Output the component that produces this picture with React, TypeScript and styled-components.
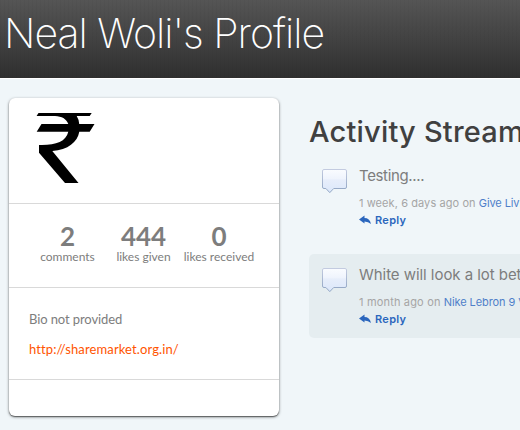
import React from "react";
import styled, { createGlobalStyle } from "styled-components";

const GlobalStyle = createGlobalStyle`
  *, *::before, *::after { box-sizing: border-box; }
  html, body { margin: 0; height: 100%; overflow: hidden; }
  body {
    background: #f0f6f9;
    font-family: Lato, sans-serif;
    font-variant-ligatures: none;
    color: #7d7d7d;
  }
  h1, h2, p { margin: 0; }
  a { text-decoration: none; }
`;

const Page = styled.div`
  width: 520px;
  height: 430px;
  overflow: hidden;
`;

const Header = styled.header`
  height: 79px;
  padding: 9px 0 0 4px;
  border-bottom: 1px solid #fff;
  background:
    repeating-linear-gradient(90deg, rgba(0, 0, 0, 0.025) 0 1px, transparent 1px 4px),
    linear-gradient(#555, #2f2f2f);
  background-clip: padding-box;
`;

const Title = styled.h1`
  font: 200 41px/48px Inter, sans-serif;
  letter-spacing: -1px;
  color: #fff;
  white-space: nowrap;
`;

const Columns = styled.main`
  display: grid;
  grid-template-columns: 270px 400px;
  column-gap: 30px;
  align-items: start;
  padding: 19px 0 0 9px;
`;

const Card = styled.aside`
  height: 318px;
  background: #fff;
  border-radius: 6px;
  box-shadow: 0 1px 3px rgba(0, 0, 0, 0.5), 0 1px 1px rgba(0, 0, 0, 0.4);
`;

const AvatarSection = styled.div`
  height: 106px;
  padding: 15px 0 0 21px;
  border-bottom: 1px solid #d9d9d9;
  svg { display: block; }
`;

const Stats = styled.div`
  display: flex;
  height: 84px;
  padding: 17px 0 0 31px;
  border-bottom: 1px solid #d9d9d9;
`;

const Stat = styled.div<{ $width: number; $gap: number }>`
  width: ${(p) => p.$width}px;
  margin-right: ${(p) => p.$gap}px;
  display: flex;
  flex-direction: column;
  align-items: center;
  white-space: nowrap;
`;

const StatValue = styled.strong`
  font: 700 26px/30px Lato, sans-serif;
  color: #7d7d7d;
`;

const StatLabel = styled.span`
  font-size: 12px;
  line-height: 12px;
`;

const Bio = styled.div`
  height: 92px;
  padding: 21px 20px 0;
  border-bottom: 1px solid #d9d9d9;
  font-size: 13px;
  line-height: 20px;
  letter-spacing: -0.1px;
`;

const SiteLink = styled.a`
  display: block;
  margin-top: 10px;
  letter-spacing: 0.12px;
  color: #ff5400;
`;

const Stream = styled.section`
  white-space: nowrap;
`;

const StreamTitle = styled.h2`
  height: 57px;
  padding-top: 16px;
  font: 500 29px/36px Inter, sans-serif;
  letter-spacing: 0.2px;
  color: #404040;
`;

const Activity = styled.article<{ $shaded?: boolean }>`
  display: flex;
  height: 84px;
  margin-bottom: 15px;
  padding: 13px 0 0 12px;
  border-radius: 5px;
  background: ${(p) => (p.$shaded ? "#e5edf0" : "transparent")};
`;

const ActivityBody = styled.div`
  margin-left: 11px;
`;

const Message = styled.p<{ $tracking: number }>`
  margin-top: -2px;
  font: 400 15px/20px Inter, sans-serif;
  letter-spacing: ${(p) => p.$tracking}px;
`;

const Meta = styled.p<{ $tracking: number }>`
  margin-top: 10px;
  font: 400 11px/14px Inter, sans-serif;
  letter-spacing: ${(p) => p.$tracking}px;
  color: #a5a5a5;
  a {
    letter-spacing: -0.1px;
    color: #4f7fc9;
  }
`;

const ReplyLink = styled.a`
  display: flex;
  align-items: center;
  gap: 4px;
  margin-top: 2px;
  font: 600 11px/16px Inter, sans-serif;
  letter-spacing: 0.3px;
  color: #2b66bd;
`;

const Rupee = () => (
  <svg width="68" height="70" viewBox="0 0 68 70">
    <path
      d="M8.5 0H61.7L59.7 3H46.7Q48.7 6 49.2 11H64.5L59.7 18.8H49.3C47.5 29 38 37 22.3 38L48.5 70H35L9 39.8V32C25 32.5 36 29 38.3 18.8H6.7L11.5 11H38.3C36 5.5 32 3.4 25 3H6.6Z"
      fill="#000"
    />
  </svg>
);

const Bubble = () => (
  <svg width="27" height="26" viewBox="0 0 27 26">
    <defs>
      <linearGradient id="bubble" x1="0" y1="0" x2="0" y2="1">
        <stop offset="0" stopColor="#fafcff" />
        <stop offset="0.4" stopColor="#eff4fd" />
        <stop offset="0.45" stopColor="#e7eefb" />
        <stop offset="1" stopColor="#dbe7fa" />
      </linearGradient>
      <linearGradient id="edge" x1="0" y1="0" x2="0" y2="1">
        <stop offset="0" stopColor="#c3cbe0" />
        <stop offset="1" stopColor="#8ea3c2" />
      </linearGradient>
    </defs>
    <path
      d="M3 1.5H24Q25.5 1.5 25.5 3V19Q25.5 20.5 24 20.5H12.7L8.8 24.6L4.9 20.5H3Q1.5 20.5 1.5 19V3Q1.5 1.5 3 1.5Z"
      fill="url(#bubble)"
      stroke="url(#edge)"
    />
  </svg>
);

const ReplyArrow = () => (
  <svg width="12" height="10" viewBox="0 0 12 10">
    <path d="M0 4.6L5.5 0.6V3Q10.6 3 12 8.9Q9.3 6.4 5.5 6.4V8.6Z" fill="#2b66bd" />
  </svg>
);

const stats = [
  { value: "2", label: "comments", width: 55, gap: 21 },
  { value: "444", label: "likes given", width: 55, gap: 12 },
  { value: "0", label: "likes received", width: 72, gap: 0 },
];

const activities = [
  { text: "Testing....", tracking: -0.35, time: "1 week, 6 days ago on", metaTracking: 0.08, topic: "Give Living a Try", shaded: false },
  { text: "White will look a lot better", tracking: -0.05, time: "1 month ago on", metaTracking: 0.17, topic: "Nike Lebron 9 V2", shaded: true },
];

export default function App() {
  return (
    <Page>
      <GlobalStyle />
      <Header>
        <Title>Neal Woli's Profile</Title>
      </Header>
      <Columns>
        <Card>
          <AvatarSection>
            <Rupee />
          </AvatarSection>
          <Stats>
            {stats.map((s) => (
              <Stat key={s.label} $width={s.width} $gap={s.gap}>
                <StatValue>{s.value}</StatValue>
                <StatLabel>{s.label}</StatLabel>
              </Stat>
            ))}
          </Stats>
          <Bio>
            <p>Bio not provided</p>
            <SiteLink href="#">http://sharemarket.org.in/</SiteLink>
          </Bio>
        </Card>
        <Stream>
          <StreamTitle>Activity Stream</StreamTitle>
          {activities.map((a) => (
            <Activity key={a.topic} $shaded={a.shaded}>
              <Bubble />
              <ActivityBody>
                <Message $tracking={a.tracking}>{a.text}</Message>
                <Meta $tracking={a.metaTracking}>
                  {a.time} <a href="#">{a.topic}</a>
                </Meta>
                <ReplyLink href="#">
                  <ReplyArrow />
                  Reply
                </ReplyLink>
              </ActivityBody>
            </Activity>
          ))}
        </Stream>
      </Columns>
    </Page>
  );
}
